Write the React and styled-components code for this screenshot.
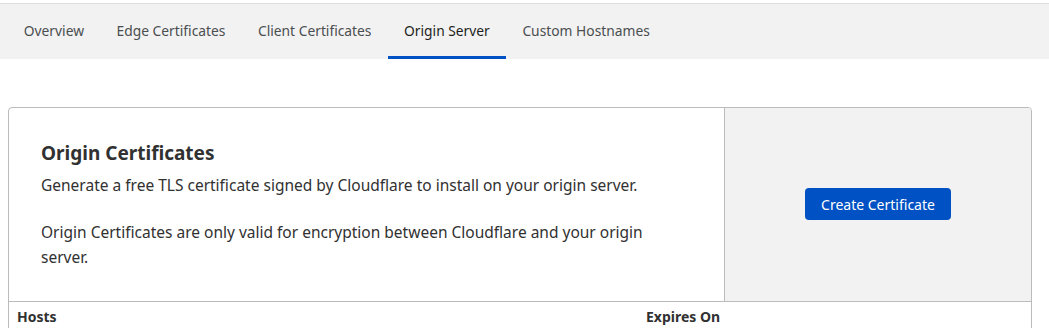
import React from 'react';
import styled, { createGlobalStyle } from 'styled-components';

const tabs = ['Overview', 'Edge Certificates', 'Client Certificates', 'Origin Server', 'Custom Hostnames'];

const App = () => (
  <>
    <GlobalStyle />
    <TabBar>
      {tabs.map((t) => (
        <Tab key={t} active={t === 'Origin Server'}>{t}</Tab>
      ))}
    </TabBar>
    <Card>
      <Intro>
        <IntroText>
          <Title>Origin Certificates</Title>
          <Para>Generate a free TLS certificate signed by Cloudflare to install on your origin server.</Para>
          <Para>Origin Certificates are only valid for encryption between Cloudflare and your origin server.</Para>
        </IntroText>
        <ActionPanel>
          <PrimaryButton type="button">Create Certificate</PrimaryButton>
        </ActionPanel>
      </Intro>
      <HeaderRow>
        <HeaderCell>Hosts</HeaderCell>
        <HeaderCell>Expires On</HeaderCell>
      </HeaderRow>
    </Card>
  </>
);

export default App;

const GlobalStyle = createGlobalStyle`
  body {
    margin: 0;
    background: #fff;
    font-family: "Noto Sans", "Open Sans", sans-serif;
    color: #313131;
  }
`;

const TabBar = styled.nav`
  display: flex;
  margin-top: 3px;
  height: 55px;
  padding-left: 7.5px;
  background: #f2f2f2;
  border-top: 1px solid #dedede;
`;

const Tab = styled.div`
  display: flex;
  align-items: center;
  padding: 1px 16.3px 0;
  font-size: 13.8px;
  color: ${(p) => (p.active ? '#1d1f20' : '#4b4e50')};
  border-bottom: 3px solid ${(p) => (p.active ? '#0051c3' : 'transparent')};
  cursor: pointer;
`;

const Card = styled.section`
  width: 1022px;
  margin: 48px 0 0 8px;
  border: 1px solid #bbbbbb;
  border-radius: 4px;
  overflow: hidden;
`;

const Intro = styled.div`
  display: grid;
  grid-template-columns: 715px 1fr;
  height: 193px;
  border-bottom: 1px solid #bbbbbb;
`;

const IntroText = styled.div`
  padding: 31px 32px 0;
`;

const Title = styled.h2`
  margin: 0 0 6px;
  font-size: 19px;
  font-weight: 700;
  line-height: 28px;
`;

const Para = styled.p`
  margin: 0 0 22px;
  max-width: 625px;
  font-size: 15.5px;
  line-height: 25px;
`;

const ActionPanel = styled.div`
  display: flex;
  align-items: center;
  justify-content: center;
  padding-bottom: 1px;
  background: #f2f2f2;
  border-left: 1px solid #bbbbbb;
`;

const PrimaryButton = styled.button`
  height: 32px;
  padding: 0 16px;
  background: #0051c3;
  color: #fff;
  border: 0;
  border-radius: 4px;
  font-family: inherit;
  font-size: 14px;
  cursor: pointer;
`;

const HeaderRow = styled.div`
  display: grid;
  grid-template-columns: 629px 1fr;
  padding: 6px 8px;
`;

const HeaderCell = styled.div`
  font-size: 14px;
  font-weight: 700;
  line-height: 18px;
`;
